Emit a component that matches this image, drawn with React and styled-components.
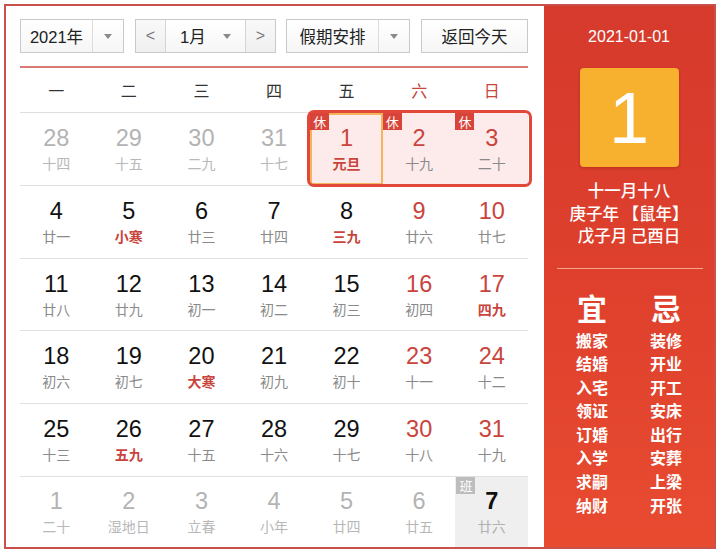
import React from "react";
import styled, { createGlobalStyle, css } from "styled-components";

const GlobalStyle = createGlobalStyle`
  html, body {
    margin: 0;
    padding: 0;
    background: #ffffff;
  }
  body {
    font-family: "Liberation Sans", "Noto Sans CJK SC", sans-serif;
  }
`;

const RED = "#c9443c";
const CJK = `"Noto Sans CJK SC", sans-serif`;
const LATIN = `"Liberation Sans", "Noto Sans CJK SC", sans-serif`;

const Frame = styled.div`
  box-sizing: border-box;
  width: 712px;
  height: 545px;
  margin: 4px;
  border: 2px solid #c9514b;
  display: flex;
  background: #fff;
`;

const Main = styled.div`
  flex: 1;
  padding: 13px 16px 0 14px;
  display: flex;
  flex-direction: column;
`;

const Toolbar = styled.div`
  display: flex;
  height: 34px;
  gap: 10px;
`;

const controlBox = css`
  box-sizing: border-box;
  height: 34px;
  border: 1px solid #c9c9c9;
  background: linear-gradient(#ffffff, #f6f6f6);
  display: flex;
  align-items: stretch;
  color: #222;
  font-size: 16.5px;
`;

const SelectBox = styled.div`
  ${controlBox};
  width: ${(p) => p.$w}px;
`;

const SelectLabel = styled.div`
  flex: 1;
  display: flex;
  align-items: center;
  justify-content: center;
  font-family: ${LATIN};
`;

const SelectArrow = styled.div`
  width: 30px;
  border-left: 1px solid #dcdcdc;
  display: flex;
  align-items: center;
  justify-content: center;
  &::after {
    content: "";
    border-left: 4px solid transparent;
    border-right: 4px solid transparent;
    border-top: 5px solid #8a8a8a;
  }
`;

const MonthGroup = styled.div`
  ${controlBox};
  width: 141px;
  margin-left: 1px;
`;

const NavButton = styled.div`
  width: 29px;
  display: flex;
  align-items: center;
  justify-content: center;
  background: linear-gradient(#f9f9f9, #efefef);
  color: #777;
  font-family: ${LATIN};
  font-size: 16px;
  ${(p) => (p.$side === "left" ? "border-right" : "border-left")}: 1px solid #d4d4d4;
`;

const MonthLabel = styled.div`
  flex: 1;
  display: flex;
  align-items: center;
  justify-content: space-between;
  padding: 0 14px 0 14px;
  font-family: ${LATIN};
  &::after {
    content: "";
    border-left: 4px solid transparent;
    border-right: 4px solid transparent;
    border-top: 5px solid #8a8a8a;
  }
`;

const TodayButton = styled.div`
  ${controlBox};
  width: 107px;
  margin-left: 1px;
  justify-content: center;
  align-items: center;
  font-family: ${CJK};
`;

const Rule = styled.div`
  height: 2px;
  background: #d97a74;
  margin-top: 13px;
`;

const WeekHeader = styled.div`
  display: grid;
  grid-template-columns: repeat(7, 1fr);
  height: 44px;
  border-bottom: 1px solid #dedede;
`;

const WeekDay = styled.div`
  display: flex;
  align-items: center;
  justify-content: center;
  font-family: ${CJK};
  font-size: 16px;
  color: ${(p) => (p.$weekend ? RED : "#333")};
`;

const Week = styled.div`
  position: relative;
  box-sizing: border-box;
  display: grid;
  grid-template-columns: repeat(7, 1fr);
  height: ${(p) => (p.$last ? "70px" : "73px")};
  border-bottom: ${(p) => (p.$last ? "none" : "1px solid #e0e0e0")};
`;

const DayCell = styled.div`
  position: relative;
  display: flex;
  flex-direction: column;
  align-items: center;
  justify-content: center;
  gap: 2px;
  background: ${(p) => (p.$holiday ? "#fcebea" : p.$work ? "#efefef" : "transparent")};
  box-shadow: ${(p) => (p.$selected ? "inset 0 0 0 2px #f3b55a" : "none")};
`;

const DayNum = styled.div`
  font-family: ${LATIN};
  font-size: 23.5px;
  line-height: 26px;
  font-weight: ${(p) => (p.$bold ? 700 : 400)};
  color: ${(p) => p.$color};
`;

const Lunar = styled.div`
  font-family: ${CJK};
  font-size: 14px;
  line-height: 20px;
  font-weight: ${(p) => (p.$term ? 700 : 400)};
  color: ${(p) => p.$color};
`;

const Badge = styled.div`
  position: absolute;
  top: 0;
  left: ${(p) => (p.$work ? "1px" : "0")};
  width: 19px;
  height: 17px;
  display: flex;
  align-items: center;
  justify-content: center;
  font-family: ${CJK};
  font-size: 13px;
  line-height: 1;
  color: #fff;
  background: ${(p) => (p.$work ? "#bdbdbd" : "#d8443a")};
  z-index: 2;
`;

const HolidayRing = styled.div`
  position: absolute;
  top: -3px;
  bottom: -2px;
  left: calc(400% / 7 - 3px);
  right: -4px;
  border: 3px solid #e2483a;
  border-radius: 7px;
  pointer-events: none;
  z-index: 1;
`;

const Side = styled.div`
  width: 170px;
  background: linear-gradient(180deg, #d63a2c 0%, #de402d 50%, #e84b30 100%);
  color: #fff;
  display: flex;
  flex-direction: column;
  align-items: center;
  padding-top: 21px;
`;

const SideDate = styled.div`
  font-family: ${LATIN};
  font-size: 16px;
  line-height: 20px;
`;

const DayTile = styled.div`
  margin-top: 21px;
  width: 99px;
  height: 99px;
  border-radius: 4px;
  background: #f7b12f;
  box-shadow: 0 1px 3px rgba(120, 20, 10, 0.35);
  display: flex;
  align-items: center;
  justify-content: center;
  font-family: ${LATIN};
  font-size: 72px;
  line-height: 1;
  color: #fff;
`;

const LunarInfo = styled.div`
  margin-top: 12px;
  display: flex;
  flex-direction: column;
  align-items: center;
  font-family: ${CJK};
  font-size: 16.5px;
  line-height: 22.5px;
  font-weight: 500;
`;

const Divider = styled.div`
  align-self: stretch;
  margin: 21px 11px 0 13px;
  height: 1px;
  background: #f2a58c;
`;

const AdviceGrid = styled.div`
  margin-top: 16px;
  display: grid;
  grid-template-columns: 74px 74px;
`;

const AdviceCol = styled.div`
  display: flex;
  flex-direction: column;
  align-items: center;
`;

const AdviceTitle = styled.div`
  font-family: ${CJK};
  font-size: 30px;
  line-height: 44px;
  font-weight: 700;
`;

const AdviceItem = styled.div`
  font-family: ${CJK};
  font-size: 16px;
  line-height: 23.6px;
  font-weight: 700;
`;

const weekdays = ["一", "二", "三", "四", "五", "六", "日"];

const mk = (d, lunar, opts = {}) => ({ d, lunar, ...opts });

const weeks = [
  [
    mk(28, "十四", { out: true }),
    mk(29, "十五", { out: true }),
    mk(30, "二九", { out: true }),
    mk(31, "十七", { out: true }),
    mk(1, "元旦", { holiday: true, selected: true, term: true, red: true }),
    mk(2, "十九", { holiday: true, red: true }),
    mk(3, "二十", { holiday: true, red: true }),
  ],
  [
    mk(4, "廿一"),
    mk(5, "小寒", { term: true }),
    mk(6, "廿三"),
    mk(7, "廿四"),
    mk(8, "三九", { term: true }),
    mk(9, "廿六", { red: true }),
    mk(10, "廿七", { red: true }),
  ],
  [
    mk(11, "廿八"),
    mk(12, "廿九"),
    mk(13, "初一"),
    mk(14, "初二"),
    mk(15, "初三"),
    mk(16, "初四", { red: true }),
    mk(17, "四九", { red: true, term: true }),
  ],
  [
    mk(18, "初六"),
    mk(19, "初七"),
    mk(20, "大寒", { term: true }),
    mk(21, "初九"),
    mk(22, "初十"),
    mk(23, "十一", { red: true }),
    mk(24, "十二", { red: true }),
  ],
  [
    mk(25, "十三"),
    mk(26, "五九", { term: true }),
    mk(27, "十五"),
    mk(28, "十六"),
    mk(29, "十七"),
    mk(30, "十八", { red: true }),
    mk(31, "十九", { red: true }),
  ],
  [
    mk(1, "二十", { out: true }),
    mk(2, "湿地日", { out: true }),
    mk(3, "立春", { out: true }),
    mk(4, "小年", { out: true }),
    mk(5, "廿四", { out: true }),
    mk(6, "廿五", { out: true }),
    mk(7, "廿六", { work: true }),
  ],
];

const goodFor = ["搬家", "结婚", "入宅", "领证", "订婚", "入学", "求嗣", "纳财"];
const badFor = ["装修", "开业", "开工", "安床", "出行", "安葬", "上梁", "开张"];

const numColor = (day) => {
  if (day.out) return "#b3b3b3";
  if (day.red) return RED;
  return "#111";
};

const lunarColor = (day) => {
  if (day.out) return "#b8b8b8";
  if (day.term) return RED;
  if (day.work) return "#b0b0b0";
  return "#8a8a8a";
};

const Day = ({ day }) => (
  <DayCell $holiday={day.holiday} $work={day.work} $selected={day.selected}>
    {day.holiday && <Badge>休</Badge>}
    {day.work && <Badge $work>班</Badge>}
    <DayNum $color={numColor(day)} $bold={day.work}>
      {day.d}
    </DayNum>
    <Lunar $color={lunarColor(day)} $term={day.term && !day.out}>
      {day.lunar}
    </Lunar>
  </DayCell>
);

const App = () => (
  <>
    <GlobalStyle />
    <Frame>
      <Main>
        <Toolbar>
          <SelectBox $w={104}>
            <SelectLabel>2021年</SelectLabel>
            <SelectArrow />
          </SelectBox>
          <MonthGroup>
            <NavButton $side="left">&lt;</NavButton>
            <MonthLabel>1月</MonthLabel>
            <NavButton $side="right">&gt;</NavButton>
          </MonthGroup>
          <SelectBox $w={124}>
            <SelectLabel>假期安排</SelectLabel>
            <SelectArrow />
          </SelectBox>
          <TodayButton>返回今天</TodayButton>
        </Toolbar>
        <Rule />
        <WeekHeader>
          {weekdays.map((w, i) => (
            <WeekDay key={w} $weekend={i >= 5}>
              {w}
            </WeekDay>
          ))}
        </WeekHeader>
        {weeks.map((week, wi) => (
          <Week key={wi} $last={wi === weeks.length - 1}>
            {week.map((day, di) => (
              <Day key={di} day={day} />
            ))}
            {wi === 0 && <HolidayRing />}
          </Week>
        ))}
      </Main>
      <Side>
        <SideDate>2021-01-01</SideDate>
        <DayTile>1</DayTile>
        <LunarInfo>
          <div>十一月十八</div>
          <div>庚子年 【鼠年】</div>
          <div>戊子月 己酉日</div>
        </LunarInfo>
        <Divider />
        <AdviceGrid>
          <AdviceCol>
            <AdviceTitle>宜</AdviceTitle>
            {goodFor.map((t) => (
              <AdviceItem key={t}>{t}</AdviceItem>
            ))}
          </AdviceCol>
          <AdviceCol>
            <AdviceTitle>忌</AdviceTitle>
            {badFor.map((t) => (
              <AdviceItem key={t}>{t}</AdviceItem>
            ))}
          </AdviceCol>
        </AdviceGrid>
      </Side>
    </Frame>
  </>
);

export default App;
